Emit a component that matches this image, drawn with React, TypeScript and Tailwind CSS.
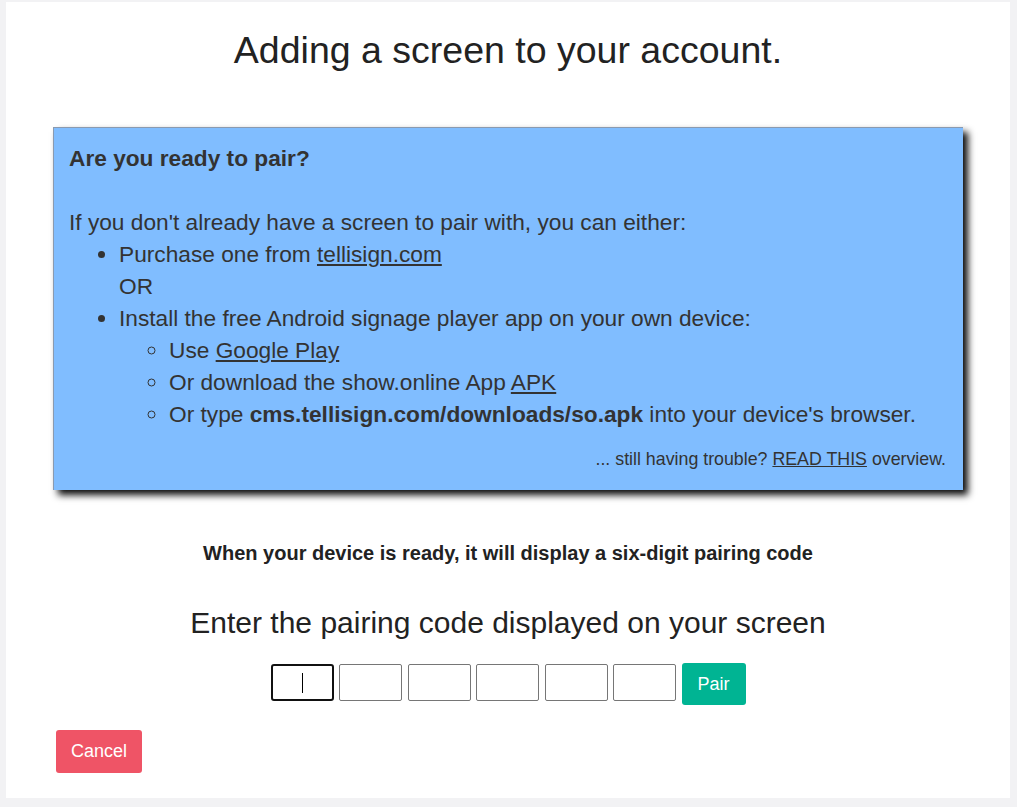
import React from 'react'

export default function App() {
    return (
        <div className="min-h-[807px] bg-[#f2f2f4] pt-[2px] pb-[9px] pl-[6px] pr-[7px] font-['Liberation_Sans',Arial,sans-serif]">
            <div className="bg-white px-[47px] pt-[26px] pb-[25px]">
                <h1 className="text-center text-[37.5px] leading-[44px] text-[#222]">Adding a screen to your account.</h1>

                <div className="mt-[55px] bg-[#80bdff] border-l border-t border-[#8a9ab0] shadow-[5px_5px_7px_rgba(0,0,0,0.95)] pt-[14px] pb-[19px] pl-[15px] pr-[17px] text-[#333] text-[22.7px] leading-[32px]">
                    <div className="font-bold">Are you ready to pair?</div>
                    <div className="h-[32px]" />
                    <div>If you don't already have a screen to pair with, you can either:</div>
                    <ul className="list-disc pl-[50px]">
                        <li>
                            Purchase one from <a href="#" className="underline">tellisign.com</a>
                            <div>OR</div>
                        </li>
                        <li>
                            Install the free Android signage player app on your own device:
                            <ul className="list-[circle] pl-[50px]">
                                <li>Use <a href="#" className="underline">Google Play</a></li>
                                <li>Or download the show.online App <a href="#" className="underline">APK</a></li>
                                <li>Or type <b>cms.tellisign.com/downloads/so.apk</b> into your device's browser.</li>
                            </ul>
                        </li>
                    </ul>
                    <div className="mt-[17px] text-right text-[17.8px] leading-[24px]">
                        ... still having trouble? <a href="#" className="underline">READ THIS</a> overview.
                    </div>
                </div>

                <div className="mt-[51px] text-center font-bold text-[20px] leading-[24px] text-[#222]">
                    When your device is ready, it will display a six-digit pairing code
                </div>

                <div className="mt-[40px] text-center text-[30px] leading-[36px] text-[#222]">
                    Enter the pairing code displayed on your screen
                </div>

                <div className="mt-[22px] flex items-start justify-center gap-[5.5px]">
                    <div className="mt-px flex h-[37px] w-[63px] items-center justify-center rounded-[3px] border-2 border-[#111]">
                        <div className="h-[20px] w-px bg-black" />
                    </div>
                    <input className="mt-px h-[37px] w-[63px] rounded-[2px] border border-[#767676] outline-none" />
                    <input className="mt-px h-[37px] w-[63px] rounded-[2px] border border-[#767676] outline-none" />
                    <input className="mt-px h-[37px] w-[63px] rounded-[2px] border border-[#767676] outline-none" />
                    <input className="mt-px h-[37px] w-[63px] rounded-[2px] border border-[#767676] outline-none" />
                    <input className="mt-px h-[37px] w-[63px] rounded-[2px] border border-[#767676] outline-none" />
                    <button className="h-[42px] w-[64px] rounded-[3px] bg-[#00b493] text-[18px] text-white">Pair</button>
                </div>

                <div className="mt-[25px] flex">
                    <button className="ml-[3px] h-[43px] w-[86px] rounded-[3px] bg-[#ef5466] text-[18px] text-white">Cancel</button>
                </div>
            </div>
        </div>
    )
}
